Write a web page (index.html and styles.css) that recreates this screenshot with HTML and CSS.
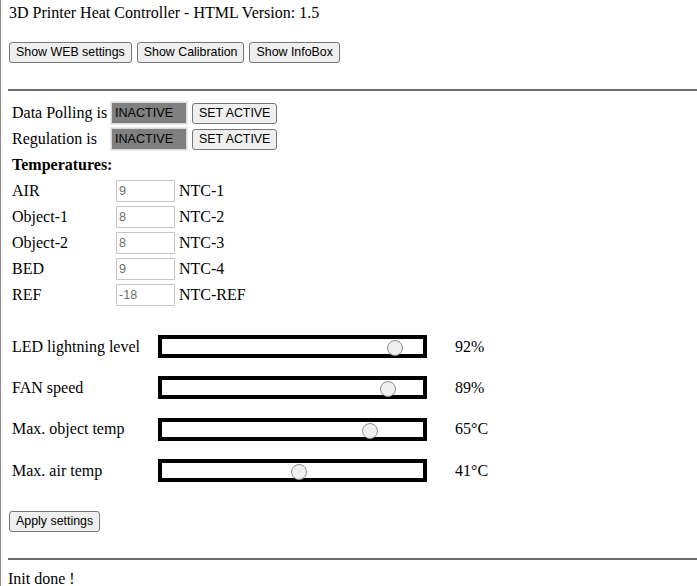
FILE: index.html
```html
<!DOCTYPE html>
<html>
<head>
<meta charset="utf-8">
<title>3D Printer Heat Controller</title>
<link rel="stylesheet" href="styles.css">
</head>
<body>
<div class="title">3D Printer Heat Controller - HTML Version: 1.5</div>
<div class="toolbar">
  <button class="btn">Show WEB settings</button>
  <button class="btn">Show Calibration</button>
  <button class="btn">Show InfoBox</button>
</div>
<hr class="rule">
<div class="status">
  <span class="label">Data Polling is</span>
  <input class="state" value="INACTIVE" readonly>
  <button class="btn">SET ACTIVE</button>
  <span class="label">Regulation is</span>
  <input class="state" value="INACTIVE" readonly>
  <button class="btn">SET ACTIVE</button>
</div>
<div class="section-title">Temperatures:</div>
<div class="temps">
  <span class="label">AIR</span><input class="temp" value="9" readonly><span class="ntc">NTC-1</span>
  <span class="label">Object-1</span><input class="temp" value="8" readonly><span class="ntc">NTC-2</span>
  <span class="label">Object-2</span><input class="temp" value="8" readonly><span class="ntc">NTC-3</span>
  <span class="label">BED</span><input class="temp" value="9" readonly><span class="ntc">NTC-4</span>
  <span class="label">REF</span><input class="temp" value="-18" readonly><span class="ntc">NTC-REF</span>
</div>
<div class="sliders">
  <span class="label">LED lightning level</span>
  <div class="track"><span class="thumb" style="--p: 0.92"></span></div>
  <span class="value">92%</span>
  <span class="label">FAN speed</span>
  <div class="track"><span class="thumb" style="--p: 0.89"></span></div>
  <span class="value">89%</span>
  <span class="label">Max. object temp</span>
  <div class="track"><span class="thumb" style="--p: 0.815"></span></div>
  <span class="value">65°C</span>
  <span class="label">Max. air temp</span>
  <div class="track"><span class="thumb" style="--p: 0.525"></span></div>
  <span class="value">41°C</span>
</div>
<div class="apply"><button class="btn">Apply settings</button></div>
<hr class="rule rule-bottom">
<div class="message">Init done !</div>
</body>
</html>
```

FILE: styles.css
```css
html {
  box-shadow: inset 1px 0 #8c8c8c;
  background: #fff;
}
body {
  margin: 4px 0 0 8px;
  font-family: "Liberation Serif", "Times New Roman", serif;
  font-size: 16px;
  color: #000;
}
.title {
  line-height: 18px;
  padding-left: 1px;
}
.toolbar {
  margin-top: 20px;
  padding-left: 1px;
  display: flex;
  gap: 5px;
}
.btn {
  font-family: "Liberation Sans", Arial, sans-serif;
  font-size: 12.4px;
  height: 21px;
  padding: 0 6px;
  background: #efefef;
  border: 1px solid #767676;
  border-radius: 3px;
  color: #000;
  line-height: 19px;
  white-space: nowrap;
}
.rule {
  margin: 26px 0 0 0;
  border: 0;
  height: 2px;
  background: #6b6b6b;
}
.status {
  margin-top: 11px;
  display: grid;
  grid-template-columns: 94px 76px auto;
  grid-auto-rows: 22px;
  row-gap: 4px;
  column-gap: 5px;
  justify-content: start;
  align-items: center;
  padding-left: 4px;
}
.label {
  line-height: 18px;
  white-space: nowrap;
}
.state {
  box-sizing: border-box;
  width: 76px;
  height: 22px;
  background: #808080;
  border: 1px solid #d9d9d9;
  outline: 1px solid #ebebeb;
  font-family: "Liberation Sans", Arial, sans-serif;
  font-size: 12.6px;
  color: #000;
  padding: 0 3px;
}
.section-title {
  font-weight: bold;
  padding-left: 4px;
  margin-top: 2px;
  line-height: 26px;
}
.temps {
  display: grid;
  grid-template-columns: 100px 59px auto;
  grid-auto-rows: 26px;
  column-gap: 4px;
  justify-content: start;
  align-items: center;
  padding-left: 4px;
}
.temp {
  box-sizing: border-box;
  width: 59px;
  height: 22px;
  border: 1px solid #c6c6c6;
  border-radius: 1px;
  font-family: "Liberation Sans", Arial, sans-serif;
  font-size: 12.6px;
  color: #6d6d6d;
  padding: 0 2px;
  background: #fff;
}
.sliders {
  margin-top: 18px;
  display: grid;
  grid-template-columns: 146px 269px auto;
  grid-auto-rows: 41.3px;
  column-gap: 0;
  justify-content: start;
  align-items: center;
  padding-left: 4px;
}
.value {
  padding-left: 28px;
}
.track {
  position: relative;
  box-sizing: border-box;
  width: 269px;
  height: 23px;
  border: 4px solid #000;
  background: #fff;
}
.thumb {
  position: absolute;
  top: 1px;
  left: calc(var(--p) * (100% - 16px));
  width: 16px;
  height: 16px;
  box-sizing: border-box;
  border-radius: 50%;
  background: #efefef;
  border: 1px solid #8f8f8f;
}
.apply {
  margin-top: 20px;
  padding-left: 1px;
}
.rule-bottom {
  margin-top: 26px;
}
.message {
  line-height: 18px;
  margin-top: 10px;
}
```
